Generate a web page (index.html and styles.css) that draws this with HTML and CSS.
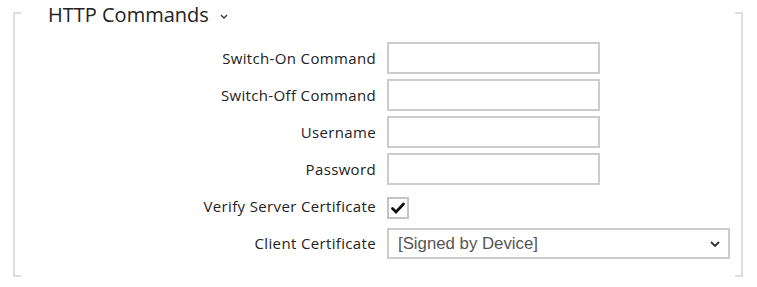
FILE: index.html
```html
<!DOCTYPE html>
<html lang="en">

<head>
    <meta charset="UTF-8">
    <title>HTTP Commands</title>
    <link rel="stylesheet" href="styles.css">
</head>

<body>
    <div class="section">
        <h2 class="section-title">HTTP Commands
            <svg class="title-chevron" viewBox="0 0 8 5" width="8" height="5">
                <path d="M1 1l3 3 3-3" fill="none" stroke="#333" stroke-width="1.3"/>
            </svg>
        </h2>
        <div class="form-grid">
            <label class="form-label">Switch-On Command</label>
            <input type="text" class="text-input">

            <label class="form-label">Switch-Off Command</label>
            <input type="text" class="text-input">

            <label class="form-label">Username</label>
            <input type="text" class="text-input">

            <label class="form-label">Password</label>
            <input type="password" class="text-input">

            <label class="form-label">Verify Server Certificate</label>
            <div class="check-cell">
                <span class="checkbox">
                    <svg viewBox="0 0 16 16" width="16" height="16">
                        <path d="M2.5 8.5l3.5 3.5 7.5-8" fill="none" stroke="#111" stroke-width="2.8" stroke-linecap="round"/>
                    </svg>
                </span>
            </div>

            <label class="form-label">Client Certificate</label>
            <div class="select-box">
                <span class="select-value">[Signed by Device]</span>
                <svg class="select-chevron" viewBox="0 0 10 6" width="10" height="6">
                    <path d="M1 1l4 4 4-4" fill="none" stroke="#333" stroke-width="1.8"/>
                </svg>
            </div>
        </div>
    </div>
</body>

</html>
```

FILE: styles.css
```css
body,
html {
    margin: 0;
    padding: 0;
    background-color: white;
    font-family: 'Open Sans', 'Noto Sans', Arial, sans-serif;
    color: #222;
}

body {
    padding-top: 12px;
}

.section {
    position: relative;
    display: flow-root;
    margin: 0 14px 0 13px;
    height: 265px;
    border-left: 2px solid #ddd;
    border-right: 2px solid #ddd;
    box-sizing: border-box;
}

/* corner ticks of the bracket */
.section::before,
.section::after {
    content: "";
    position: absolute;
    top: 0;
    bottom: 0;
    width: 6px;
    border-top: 2px solid #ddd;
    border-bottom: 2px solid #ddd;
    pointer-events: none;
}

.section::before {
    left: 0;
}

.section::after {
    right: 0;
}

.section-title {
    margin: -12px 0 0 33px;
    font-size: 20px;
    font-weight: 400;
    line-height: 30px;
    color: #222;
    display: flex;
    align-items: center;
    gap: 11px;
}

.title-chevron {
    margin-top: 2px;
}

.form-grid {
    display: grid;
    grid-template-columns: 361px 1fr;
    column-gap: 11px;
    row-gap: 5px;
    margin-top: 12px;
    grid-auto-rows: 32px;
}

.form-label {
    font-size: 15px;
    letter-spacing: 0.35px;
    text-align: right;
    align-self: center;
    white-space: nowrap;
}

.text-input {
    width: 213px;
    height: 32px;
    box-sizing: border-box;
    border: 2px solid #ccc;
    margin: 0;
    padding: 4px 8px;
    font-size: 15px;
    outline: none;
}

.check-cell {
    display: flex;
    align-items: center;
    padding-top: 3px;
}

.checkbox {
    width: 22px;
    height: 22px;
    box-sizing: border-box;
    border: 2px solid #c4c4c4;
    display: flex;
    align-items: center;
    justify-content: center;
}

.select-box {
    width: 343px;
    height: 31px;
    margin-top: 1px;
    box-sizing: border-box;
    border: 2px solid #ccc;
    display: flex;
    align-items: center;
    justify-content: space-between;
    padding: 0 8px 0 9px;
    font-family: 'Liberation Sans', Arial, sans-serif;
    font-size: 16.8px;
    color: #555;
}

.select-chevron {
    margin-top: 1px;
}
```
